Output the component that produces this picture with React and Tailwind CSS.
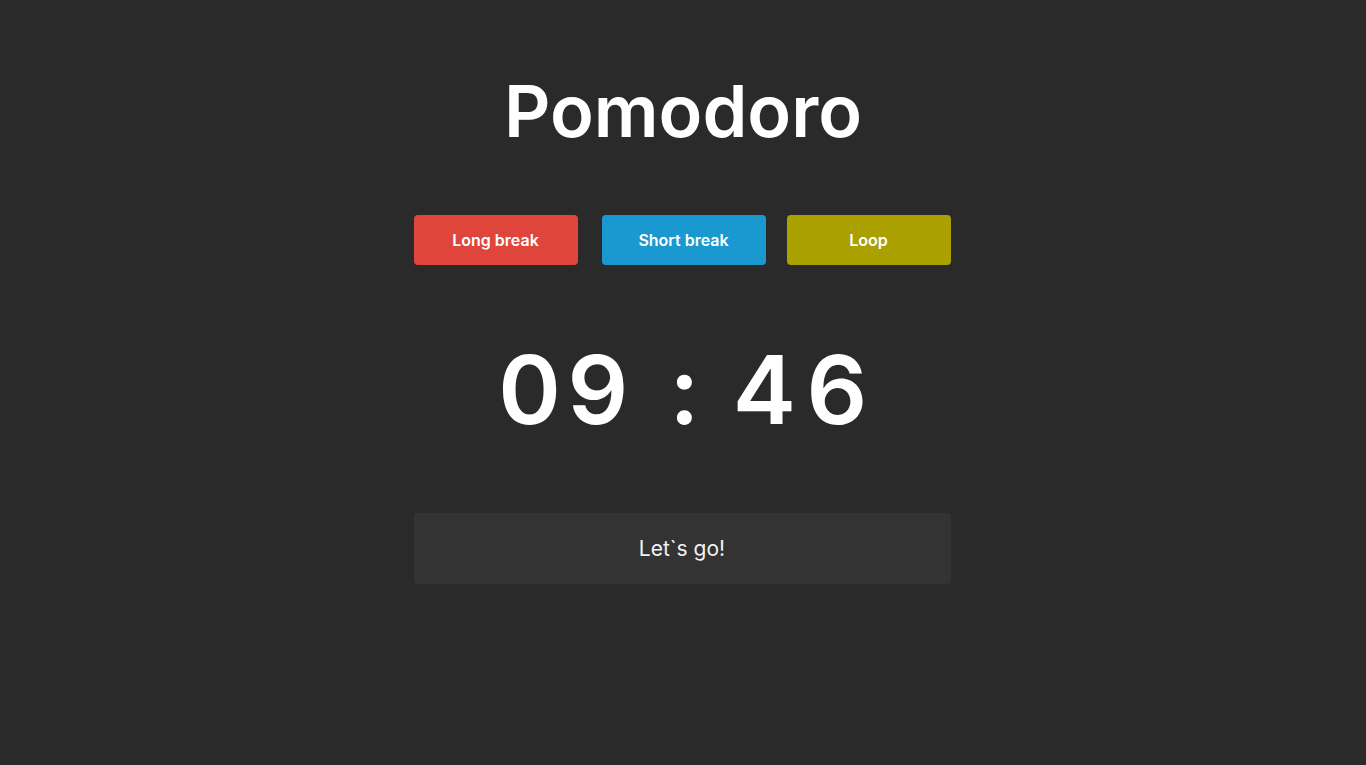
export default function App() {
  return (
    <div className="min-h-[765px] w-full bg-[#2a2a2a] flex flex-col items-center font-['Inter',sans-serif] text-white">
      <h1 className="mt-[75px] text-[72px] leading-none font-semibold">Pomodoro</h1>
      <div className="mt-[68px] w-[537px] -translate-x-px flex">
        <button className="w-[164px] h-[50px] rounded-[4px] bg-[#e0453c] text-[16px] font-semibold text-white">Long break</button>
        <button className="ml-[24px] w-[164px] h-[50px] rounded-[4px] bg-[#1a98d0] text-[16px] font-semibold text-white">Short break</button>
        <button className="ml-[21px] w-[164px] h-[50px] rounded-[4px] bg-[#aaa000] text-[16px] font-semibold text-white">Loop</button>
      </div>
      <div className="mt-[71px] h-[106px] flex items-center text-[95px] leading-none font-semibold">
        <span className="w-[49px] flex justify-center">0</span>
        <span className="ml-[22px] w-[44px] flex justify-center">9</span>
        <span className="ml-[59px] w-[11px] flex justify-center">:</span>
        <span className="ml-[47px] w-[55px] flex justify-center">4</span>
        <span className="ml-[21px] w-[48px] flex justify-center">6</span>
      </div>
      <button className="mt-[71px] w-[537px] h-[71px] -translate-x-px rounded-[4px] bg-[#333333] text-[21px] text-[#f2f2f2]">Let`s go!</button>
    </div>
  );
}
